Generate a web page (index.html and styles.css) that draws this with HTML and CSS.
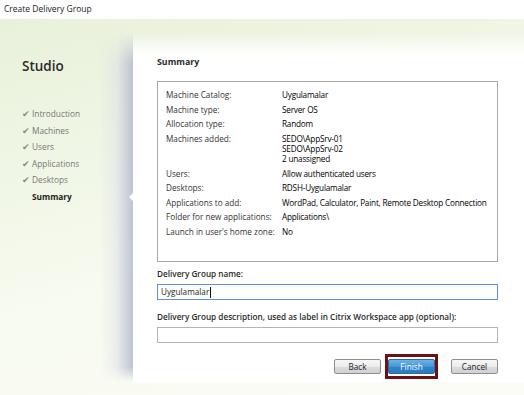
FILE: index.html
```html
<!DOCTYPE html>
<html>
<head>
<meta charset="utf-8">
<link rel="stylesheet" href="styles.css">
</head>
<body>
<div class="window">
  <div class="titlebar">Create Delivery Group</div>
  <div class="main">
    <aside class="sidebar">
      <div class="brand">Studio</div>
      <ul class="steps">
        <li class="done"><span class="check">✔</span>Introduction</li>
        <li class="done"><span class="check">✔</span>Machines</li>
        <li class="done"><span class="check">✔</span>Users</li>
        <li class="done"><span class="check">✔</span>Applications</li>
        <li class="done"><span class="check">✔</span>Desktops</li>
        <li class="current">Summary</li>
      </ul>
    </aside>
    <div class="shade"></div>
    <section class="panel">
      <span class="notch"></span>
      <h2 class="heading">Summary</h2>
      <div class="summary">
        <div class="row"><span class="k">Machine Catalog:</span><span class="v">Uygulamalar</span></div>
        <div class="row"><span class="k">Machine type:</span><span class="v">Server OS</span></div>
        <div class="row"><span class="k">Allocation type:</span><span class="v">Random</span></div>
        <div class="row"><span class="k">Machines added:</span><span class="v">SEDO\AppSrv-01<br>SEDO\AppSrv-02<br>2 unassigned</span></div>
        <div class="row"><span class="k">Users:</span><span class="v">Allow authenticated users</span></div>
        <div class="row"><span class="k">Desktops:</span><span class="v">RDSH-Uygulamalar</span></div>
        <div class="row"><span class="k">Applications to add:</span><span class="v">WordPad, Calculator, Paint, Remote Desktop Connection</span></div>
        <div class="row"><span class="k">Folder for new applications:</span><span class="v">Applications\</span></div>
        <div class="row"><span class="k">Launch in user's home zone:</span><span class="v">No</span></div>
      </div>
      <label class="label first">Delivery Group name:</label>
      <div class="input focused"><span>Uygulamalar</span><span class="caret"></span></div>
      <label class="label second">Delivery Group description, used as label in Citrix Workspace app (optional):</label>
      <div class="input"></div>
      <div class="buttons">
        <button class="btn">Back</button>
        <div class="highlight"><button class="btn primary">Finish</button></div>
        <button class="btn cancel">Cancel</button>
      </div>
    </section>
  </div>
</div>
</body>
</html>
```

FILE: styles.css
```css
* { box-sizing: border-box; }
html, body { margin: 0; padding: 0; }
body {
  width: 524px;
  height: 395px;
  overflow: hidden;
  font-family: "Open Sans", "Noto Sans", sans-serif;
  color: #1e1e1e;
  background: #fff;
}
.window { width: 524px; height: 395px; display: flex; flex-direction: column; }
.titlebar {
  height: 19px;
  background: #fff;
  font-size: 8.5px;
  line-height: 18px;
  padding-left: 4px;
  color: #222;
}
.main {
  flex: 1;
  display: flex;
  position: relative;
  background: linear-gradient(165deg, #e8f1da 0%, #f1f7e7 35%, #f8fbf1 60%, #fbfcf6 100%);
}
.sidebar {
  flex: none;
  width: 100px;
  padding-left: 22px;
}
.brand {
  margin-top: 38px;
  font-size: 13.5px;
  font-weight: 600;
  color: #2b2b2b;
  line-height: 18px;
}
.steps {
  list-style: none;
  margin: 31px 0 0 0;
  padding: 0;
}
.steps li {
  height: 16.5px;
  line-height: 16.5px;
  font-size: 8.3px;
  color: #777;
  white-space: nowrap;
}
.check {
  display: inline-block;
  width: 10px;
  font-size: 8.5px;
  color: #8a8a8a;
}
.steps li.current {
  padding-left: 10px;
  font-weight: 700;
  color: #1e1e1e;
}
.shade {
  flex: none;
  width: 33px;
  margin: 14px 0 13px 0;
  background:
    linear-gradient(90deg, rgba(200,205,214,0) 0%, rgba(222,225,231,0.55) 50%, rgba(190,196,208,1) 100%);
  -webkit-mask-image: linear-gradient(180deg, transparent 0, #000 30px, #000 calc(100% - 15px), transparent 100%);
  mask-image: linear-gradient(180deg, transparent 0, #000 30px, #000 calc(100% - 15px), transparent 100%);
}
.panel {
  flex: 1;
  min-width: 0;
  position: relative;
  margin: 14px 0 13px 0;
  padding: 0 26px 0 24px;
  display: flex;
  flex-direction: column;
  background: linear-gradient(180deg, rgba(255,255,255,0) 0, #fff 22px);
}
.notch {
  position: absolute;
  left: -4px;
  top: 160px;
  width: 0;
  height: 0;
  border-top: 4px solid transparent;
  border-bottom: 4px solid transparent;
  border-right: 4px solid #fff;
}
.heading {
  margin: 23px 0 0 0;
  font-size: 8.8px;
  font-weight: 700;
  line-height: 12px;
  color: #2a2a2a;
}
.summary {
  margin-top: 13px;
  height: 181px;
  border: 1px solid #a8a8a8;
  padding: 8px 8px 0 8px;
  display: flex;
  flex-direction: column;
  gap: 4.65px;
  font-size: 8.2px;
  line-height: 10px;
}
.row { display: flex; }
.k { width: 116px; flex: none; color: #333; }
.v { color: #000; font-weight: 400; white-space: nowrap; letter-spacing: -0.2px; }
.label {
  display: block;
  font-size: 8.2px;
  line-height: 10px;
  font-weight: 600;
  color: #2a2a2a;
}
.label.first { margin-top: 7px; }
.label.second { margin-top: 12px; }
.input {
  margin-top: 5px;
  height: 16px;
  border: 1px solid #b4b4b4;
  background: #fff;
  font-size: 8.2px;
  line-height: 14px;
  padding-left: 3px;
  display: flex;
  align-items: center;
}
.input.focused { border-color: #5d93cf; }
.caret {
  display: inline-block;
  width: 1px;
  height: 11px;
  background: #111;
  margin-left: 0.5px;
}
.buttons {
  margin-top: 11px;
  display: flex;
  justify-content: flex-end;
  align-items: center;
}
.btn {
  width: 47px;
  height: 15px;
  padding: 0;
  font-family: inherit;
  font-size: 8.2px;
  line-height: 13px;
  color: #222;
  border: 1px solid #8e8e8e;
  border-radius: 2px;
  background: linear-gradient(180deg, #f7f7f7 0%, #ececec 50%, #dcdcdc 51%, #d2d2d2 100%);
}
.highlight {
  margin-left: 4px;
  border: 3px solid #6d0f14;
  padding: 2px 0 2px 0;
  display: flex;
}
.btn.primary {
  color: #fff;
  border-color: #2a6aa5;
  background: linear-gradient(180deg, #6db1e6 0%, #4596d6 50%, #2f84c9 51%, #2b7cc0 100%);
}
.btn.cancel { margin-left: 13px; }
```
